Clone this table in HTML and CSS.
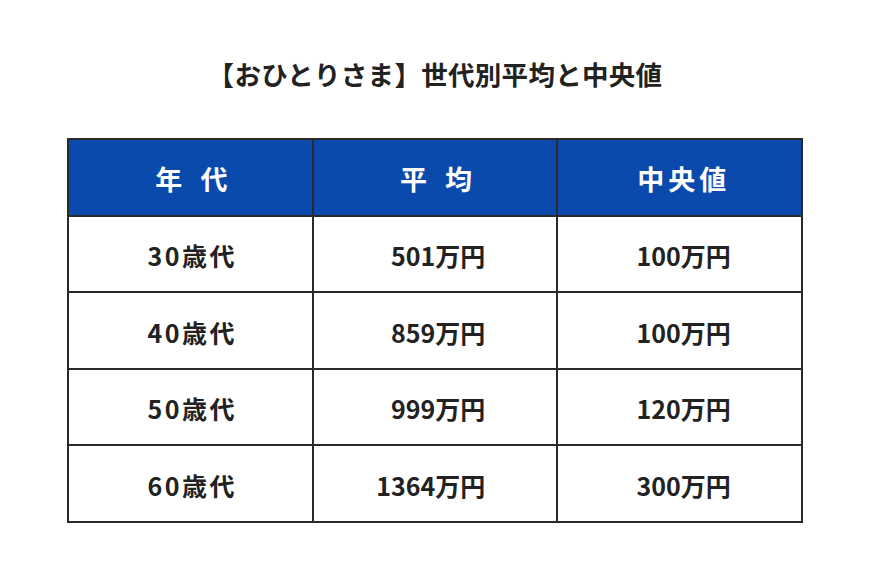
FILE: index.html
```html
<!DOCTYPE html>
<html lang="ja">
<head>
<meta charset="utf-8">
<title>【おひとりさま】世代別平均と中央値</title>
<link rel="stylesheet" href="styles.css">
</head>
<body>
<main class="page">
  <h1 class="title">【おひとりさま】世代別平均と中央値</h1>
  <div class="table">
    <div class="cell head head-age">年 代</div>
    <div class="cell head head-avg">平 均</div>
    <div class="cell head head-med">中央値</div>

    <div class="cell age">30歳代</div>
    <div class="cell avg">501万円</div>
    <div class="cell med">100万円</div>

    <div class="cell age">40歳代</div>
    <div class="cell avg">859万円</div>
    <div class="cell med">100万円</div>

    <div class="cell age">50歳代</div>
    <div class="cell avg">999万円</div>
    <div class="cell med">120万円</div>

    <div class="cell age">60歳代</div>
    <div class="cell avg">1364万円</div>
    <div class="cell med">300万円</div>
  </div>
</main>
</body>
</html>
```

FILE: styles.css
```css
html, body {
  margin: 0;
  padding: 0;
  background: #ffffff;
}

body {
  font-family: "Noto Sans CJK JP", "Noto Sans", sans-serif;
  color: #222222;
}

.page {
  width: 870px;
  height: 580px;
  display: flex;
  flex-direction: column;
  align-items: center;
  box-sizing: border-box;
  padding-top: 55px;
}

.title {
  margin: 0;
  font-size: 26.5px;
  font-weight: 700;
  line-height: 38px;
  color: #222222;
  letter-spacing: 0.3px;
}

.table {
  margin-top: 45px;
  width: 736px;
  display: grid;
  grid-template-columns: repeat(3, 1fr);
  grid-auto-rows: 74.5px;
  gap: 2px;
  padding: 2px;
  box-sizing: border-box;
  background: #2a2a2a;
}

.cell {
  background: #ffffff;
  display: flex;
  align-items: center;
  justify-content: center;
  font-size: 25px;
  font-weight: 700;
  color: #222222;
  padding-top: 3px;
  box-sizing: border-box;
}

.head {
  background: #0a4aad;
  color: #ffffff;
  font-size: 27px;
  padding-top: 2px;
}

.head-age,
.head-avg {
  letter-spacing: 6px;
  padding-left: 8px;
}

.head-med {
  letter-spacing: 4px;
  padding-left: 8px;
}

.age {
  letter-spacing: 2.5px;
  padding-left: 4px;
}

.avg {
  justify-content: flex-end;
  padding-right: 71px;
}

.med {
  padding-left: 8px;
}
```
